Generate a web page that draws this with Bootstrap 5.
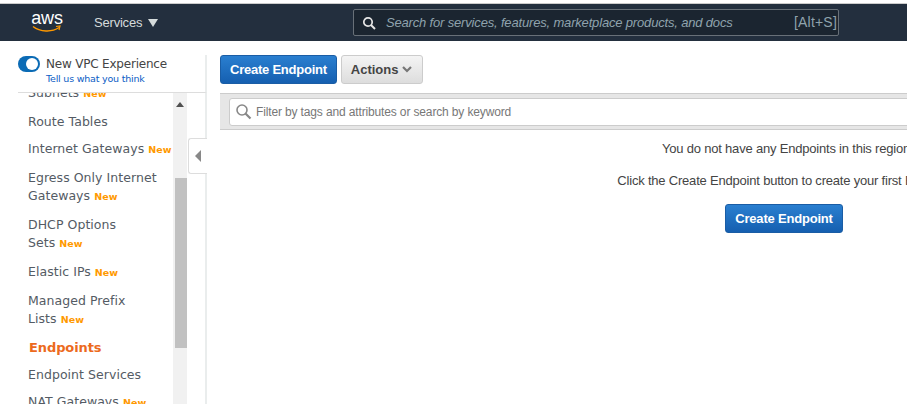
<!DOCTYPE html>
<html lang="en"><head><meta charset="utf-8"><title>Endpoints</title>
<link href="https://cdn.jsdelivr.net/npm/bootstrap@5.3.0/dist/css/bootstrap.min.css" rel="stylesheet">
<style>
html,body{height:404px;overflow:hidden;background:#fff}
body{font-family:"Liberation Sans",Arial,sans-serif;color:#444;font-size:13px}
.top-strip{height:4px;background:#fff;border-bottom:1px solid #ccc}
.aws-bar{height:37px;background:#232f3e;padding-left:32px}
.aws-logo{width:30px;height:27px;padding-top:2px}
.aws-word{font:400 18px/14px "Liberation Sans",sans-serif;color:#fff;letter-spacing:-.2px}
.svc{color:#d5dbdb;font-size:13px;letter-spacing:-.2px;margin-left:32px;width:64px}
.svc-caret{width:0;height:0;border-left:5px solid transparent;border-right:5px solid transparent;border-top:8px solid #d5dbdb;margin-left:6px}
.aws-search{margin-left:195px;width:486px;height:27px;background:#1b2530;border:1px solid #687078;border-radius:2px;padding:0 1px 0 8px;color:#8fa3ad;font-size:13px}
.aws-search em{margin-left:10px;letter-spacing:-.17px}
.aws-search span{font-size:14px;letter-spacing:.2px}
.body-row{height:363px}
.side{width:207px;flex:none}
.toggle-box{height:38px;margin:14px 0 0 18px;border-bottom:1px solid #ddd;border-right:2px solid #eaeded;padding-top:1px}
.sw{width:22px;height:16px;background:#0b6bb5;border-radius:8px;position:relative;flex:none}
.sw::after{content:"";position:absolute;right:2px;top:2px;width:12px;height:12px;border-radius:50%;background:#fff}
.vpc-t{font:12px/16px "DejaVu Sans",sans-serif;color:#444;margin-left:6px;letter-spacing:-.2px}
.vpc-l{font:9.5px/12px "DejaVu Sans",sans-serif;color:#0b5cc5;margin-left:28px;margin-top:1px;letter-spacing:-.2px}
.side-body{height:311px;border-right:2px solid #eaeded}
.side-list{width:173px;flex:none;overflow:hidden;padding-left:28px}
.side-inner{margin-top:-9px}
.item{font:12.5px/18px "DejaVu Sans",sans-serif;color:#545b64;margin-bottom:9px;letter-spacing:.05px}
.item-gap{margin-bottom:11px}
.item-wrap{margin-top:11px;margin-bottom:11px}
.item b{font:700 9.5px "DejaVu Sans",sans-serif;color:#ff9900}
.item.cur{font-weight:700;color:#ec6a1d;font-size:13px;margin-left:1px;letter-spacing:-.1px}
.sbar{width:14px;background:#f1f1f1;flex:none}
.sb-up{height:22px;display:flex;justify-content:center;padding-top:9px}
.sb-up i{width:0;height:0;border-left:4px solid transparent;border-right:4px solid transparent;border-bottom:5px solid #505050}
.sb-gap{height:63px}
.sb-thumb{height:170px;background:#c1c1c1;margin-left:2px}
.coll{width:19px;height:36px;flex:none;margin:45px 0 0 1px;border:1px solid #ddd;border-right:0;border-radius:3px 0 0 3px;display:flex;align-items:center;justify-content:center;background:#fff}
.coll i{width:0;height:0;border-top:6px solid transparent;border-bottom:6px solid transparent;border-right:6px solid #888}
.main-w{width:1128px;flex:none;margin-left:13px;padding-top:14px}
.b-blue{height:29px;padding:0 9px;background:linear-gradient(#2a7fd0,#155fb0);border:1px solid #1a5da5;border-radius:3px;color:#fff;font-weight:700;font-size:13px;line-height:27px;letter-spacing:-.24px}
.b-act{height:29px;margin-left:4px;padding:0 10px 0 9px;background:linear-gradient(#f4f4f4,#ddd);border:1px solid #ccc;border-radius:3px;color:#444;font-weight:700;font-size:13px;line-height:27px}
.act-car{width:10px;height:7px;margin-left:4px;flex:none}
.filter-band{height:37px;margin-top:9px;background:#e6e6e6;border-top:1px solid #ccc;border-bottom:1px solid #ccc;padding:4px 0 4px 9px}
.filter-in{height:28px;background:#fff;border:1px solid #ccc;border-radius:3px;padding:0 0 1px 5px;font-size:12px;color:#777;letter-spacing:-.14px}
.filter-in span{margin-left:4px}
.empty{text-align:center;color:#444;font-size:13px;line-height:16px;padding-top:11px;letter-spacing:-.2px}
.empty p{margin:0 0 16px;padding-left:4px}
.empty .b-blue{display:inline-block;letter-spacing:-.2px;margin-top:-1px}
</style></head><body>
<div class="top-strip"></div>
<nav class="aws-bar d-flex align-items-center">
 <div class="aws-logo d-flex flex-column align-items-center">
  <span class="aws-word">aws</span>
  <svg width="30" height="9" viewBox="0 0 30 9"><path d="M1 1.5C8 7 20 7.5 27 2.5" fill="none" stroke="#f90" stroke-width="1.4"/><path d="M24 1.5l4-.5-1 4" fill="none" stroke="#f90" stroke-width="1.2"/></svg>
 </div>
 <span class="svc d-flex align-items-center flex-shrink-0 text-nowrap" >Services<i class="svc-caret flex-shrink-0"></i></span>
 <div class="aws-search d-flex align-items-center flex-shrink-0">
  <svg width="14" height="14" viewBox="0 0 14 14" class="flex-shrink-0"><circle cx="6" cy="6" r="4.2" fill="none" stroke="#e6e6e6" stroke-width="1.7"/><path d="M9 9l4 4" stroke="#e6e6e6" stroke-width="2"/></svg>
  <em class="flex-grow-1 text-nowrap">Search for services, features, marketplace products, and docs</em>
  <span class="text-nowrap">[Alt+S]</span>
 </div>
</nav>
<div class="body-row d-flex">
 <aside class="side d-flex flex-column flex-shrink-0">
  <div class="toggle-box">
   <div class="d-flex align-items-center"><span class="sw"></span><span class="vpc-t text-nowrap">New VPC Experience</span></div>
   <div class="vpc-l text-nowrap">Tell us what you think</div>
  </div>
  <div class="side-body d-flex">
   <div class="side-list"><div class="side-inner">
    <div class="item item-gap">Subnets <b>New</b></div>
    <div class="item">Route Tables</div>
    <div class="item text-nowrap">Internet Gateways <b>New</b></div>
    <div class="item item-wrap">Egress Only Internet<br>Gateways <b>New</b></div>
    <div class="item item-wrap">DHCP Options<br>Sets <b>New</b></div>
    <div class="item item-wrap">Elastic IPs <b>New</b></div>
    <div class="item item-wrap">Managed Prefix<br>Lists <b>New</b></div>
    <div class="item cur">Endpoints</div>
    <div class="item">Endpoint Services</div>
    <div class="item">NAT Gateways <b>New</b></div>
   </div></div>
   <div class="sbar"><div class="sb-up"><i></i></div><div class="sb-gap"></div><div class="sb-thumb"></div></div>
   <div class="coll"><i></i></div>
  </div>
 </aside>
 <main class="main-w">
  <div class="d-flex align-items-center">
   <span class="b-blue">Create Endpoint</span>
   <span class="b-act d-flex align-items-center">Actions<svg class="act-car" viewBox="0 0 10 7"><path d="M1 1l4 4 4-4" fill="none" stroke="#777" stroke-width="2.2"/></svg></span>
  </div>
  <div class="filter-band">
   <div class="filter-in d-flex align-items-center">
    <svg width="17" height="17" viewBox="0 0 17 17" class="flex-shrink-0"><circle cx="7" cy="7" r="5" fill="none" stroke="#888" stroke-width="1.6"/><path d="M10.5 10.5l5 5" stroke="#888" stroke-width="2.2"/></svg>
    <span>Filter by tags and attributes or search by keyword</span>
   </div>
  </div>
  <div class="empty">
   <p>You do not have any Endpoints in this region</p>
   <p>Click the Create Endpoint button to create your first Endpoint</p>
   <span class="b-blue">Create Endpoint</span>
  </div>
 </main>
</div>
</body></html>
